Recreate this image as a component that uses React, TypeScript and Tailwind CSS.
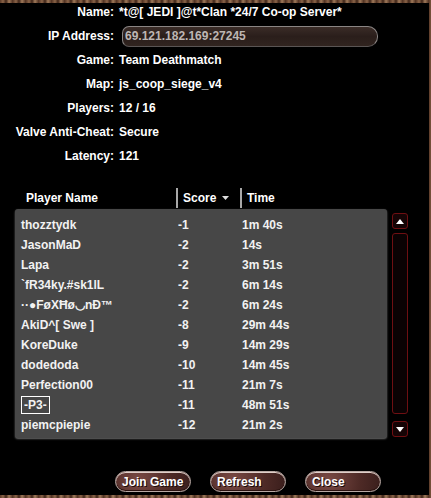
import React from "react";

const info: [string, string][] = [
  ["Name:", "*t@[ JEDI ]@t*Clan *24/7 Co-op Server*"],
  ["IP Address:", "69.121.182.169:27245"],
  ["Game:", "Team Deathmatch"],
  ["Map:", "js_coop_siege_v4"],
  ["Players:", "12 / 16"],
  ["Valve Anti-Cheat:", "Secure"],
  ["Latency:", "121"],
];

const players: [string, string, string][] = [
  ["thozztydk", "-1", "1m 40s"],
  ["JasonMaD", "-2", "14s"],
  ["Lapa", "-2", "3m 51s"],
  ["`fR34ky.#sk1lL", "-2", "6m 14s"],
  ["··●FøXĦø◡nÐ™", "-2", "6m 24s"],
  ["AkiD^[ Swe ]", "-8", "29m 44s"],
  ["KoreDuke", "-9", "14m 29s"],
  ["dodedoda", "-10", "14m 45s"],
  ["Perfection00", "-11", "21m 7s"],
  ["-P3-", "-11", "48m 51s"],
  ["piemcpiepie", "-12", "21m 2s"],
];

const texture =
  "bg-[repeating-linear-gradient(90deg,#5b3a28_0px,#8a6448_3px,#3e2418_6px,#a07a5a_9px,#4a2c1e_13px)]";

function GameButton({ label }: { label: string }) {
  return (
    <button className="w-[76px] h-[21px] rounded-full border border-[#b9a9a4] bg-[radial-gradient(circle_at_30%_40%,#7a4a44,#4e2a26_60%,#3a1e1c)] shadow-[inset_0_1px_0_#e0cfc8,inset_0_-1px_0_#2a1210] text-left pl-[6px] text-white font-bold text-[12px] [text-shadow:1px_1px_0_#1a0a08]">
      {label}
    </button>
  );
}

function ScrollButton({ up }: { up?: boolean }) {
  return (
    <div className="w-[16px] h-[16px] rounded-[3px] border border-[#6e0f12] bg-[#150405] flex items-center justify-center">
      <svg width="8" height="5" viewBox="0 0 8 5">
        {up ? <path d="M0 5 L4 0 L8 5 Z" fill="#fff" /> : <path d="M0 0 L8 0 L4 5 Z" fill="#fff" />}
      </svg>
    </div>
  );
}

export default function App() {
  return (
    <div
      className="w-[431px] h-[498px] bg-black flex flex-col overflow-hidden text-white"
      style={{ fontFamily: '"Liberation Sans", Arial, sans-serif' }}
    >
      <div className={`h-[3px] ${texture}`} />
      <div className="flex flex-1">
        <div className="flex-1 flex flex-col">
          {/* server info */}
          <div className="flex flex-col -mt-[3px]">
            {info.map(([k, v]) => (
              <div key={k} className="h-[24px] flex items-center font-bold text-[12px]">
                <div className="w-[114px] text-right shrink-0">{k}</div>
                {k === "IP Address:" ? (
                  <div className="ml-[8px] w-[256px] h-[21px] rounded-l-[7px] rounded-r-[10px] border border-[#8a8584] border-b-[#5a5554] bg-[linear-gradient(180deg,#3a2c27,#2a1e1b_50%,#31241f)] flex items-center pl-[2px] text-[#bdb6b3]">
                    {v}
                  </div>
                ) : (
                  <div className="ml-[5px]">{v}</div>
                )}
              </div>
            ))}
          </div>

          {/* column headers */}
          <div className="mt-[19px] h-[22px] flex items-center font-bold text-[12px] pl-[26px]">
            <div className="w-[150px]">Player Name</div>
            <div className="w-[2px] h-[20px] bg-[#a8a8a8] mr-[5px]" />
            <div className="w-[57px] flex items-center">
              Score
              <svg className="ml-[6px]" width="7" height="4" viewBox="0 0 7 4">
                <path d="M0 0 L7 0 L3.5 4 Z" fill="#ddd" />
              </svg>
            </div>
            <div className="w-[2px] h-[20px] bg-[#a8a8a8] mr-[5px]" />
            <div>Time</div>
          </div>

          {/* player list + scrollbar */}
          <div className="flex pl-[15px]">
            <div className="w-[372px] h-[229px] bg-[#474747] rounded-[3px] shadow-[0_1px_2px_#6a6a6a] pt-[6px] pl-[6px]">
              {players.map(([n, s, t], i) => (
                <div key={i} className="h-[20px] flex items-center font-bold text-[12px] text-[#f2f2f2]">
                  <div className="w-[157px]">
                    {n === "-P3-" ? (
                      <span className="border border-white px-[2px] py-[1px] leading-[12px]">{n}</span>
                    ) : (
                      n
                    )}
                  </div>
                  <div className="w-[64px]">{s}</div>
                  <div>{t}</div>
                </div>
              ))}
            </div>
            <div className="ml-[5px] mt-[4px] flex flex-col gap-[4px]">
              <ScrollButton up />
              <div className="w-[16px] h-[181px] rounded-[3px] border border-[#6e0f12] bg-[#0a0203]" />
              <div className="mt-[3px]">
                <ScrollButton />
              </div>
            </div>
          </div>

          {/* buttons */}
          <div className="mt-[33px] flex pl-[115px] gap-[19px]">
            <GameButton label="Join Game" />
            <GameButton label="Refresh" />
            <GameButton label="Close" />
          </div>
        </div>
        <div className={`w-[2px] ${texture}`} />
      </div>
      <div className={`h-[3px] ${texture}`} />
    </div>
  );
}
